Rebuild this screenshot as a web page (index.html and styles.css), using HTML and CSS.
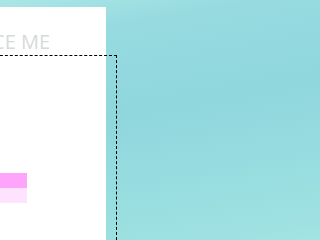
FILE: index.html
```html
<!DOCTYPE html>
<html>
<head>
<meta charset="utf-8">
<link rel="stylesheet" href="styles.css">
</head>
<body>
<div class="stage">
  <div class="panel">
    <div class="title">PLACE ME</div>
    <div class="bars">
      <div class="bar bar-strong"></div>
      <div class="bar bar-soft"></div>
    </div>
  </div>
  <div class="selection"></div>
</div>
</body>
</html>
```
FILE: styles.css
```css
html, body {
  margin: 0;
  padding: 0;
  height: 100%;
  overflow: hidden;
}
html {
  background: linear-gradient(170deg, #aae6e6 0%, #97dbe0 15%, #8fd6dd 45%, #98dde0 75%, #a2e3e3 100%) no-repeat;
  background-size: 100% 100%;
}
.stage {
  position: relative;
  height: 100%;
  padding-top: 7px;
  box-sizing: border-box;
}
.panel {
  width: 106px;
  height: 100%;
  background: #ffffff;
  overflow: hidden;
  display: flex;
  flex-direction: column;
}
.title {
  margin-top: 23px;
  margin-left: -43px;
  white-space: nowrap;
  font-family: "Open Sans", sans-serif;
  font-size: 20px;
  line-height: 24px;
  letter-spacing: 0;
  color: #d6dada;
}
.bars {
  margin-top: 119px;
  display: flex;
  flex-direction: column;
}
.bar {
  width: 27px;
  height: 15px;
}
.bar-strong { background: #ffa4fb; }
.bar-soft { background: #ffe2fd; }
.selection {
  position: absolute;
  left: -10px;
  top: 55px;
  bottom: 0;
  width: 126px;
  border-top: 1px dashed #000;
  border-right: 1px dashed #000;
}
```
